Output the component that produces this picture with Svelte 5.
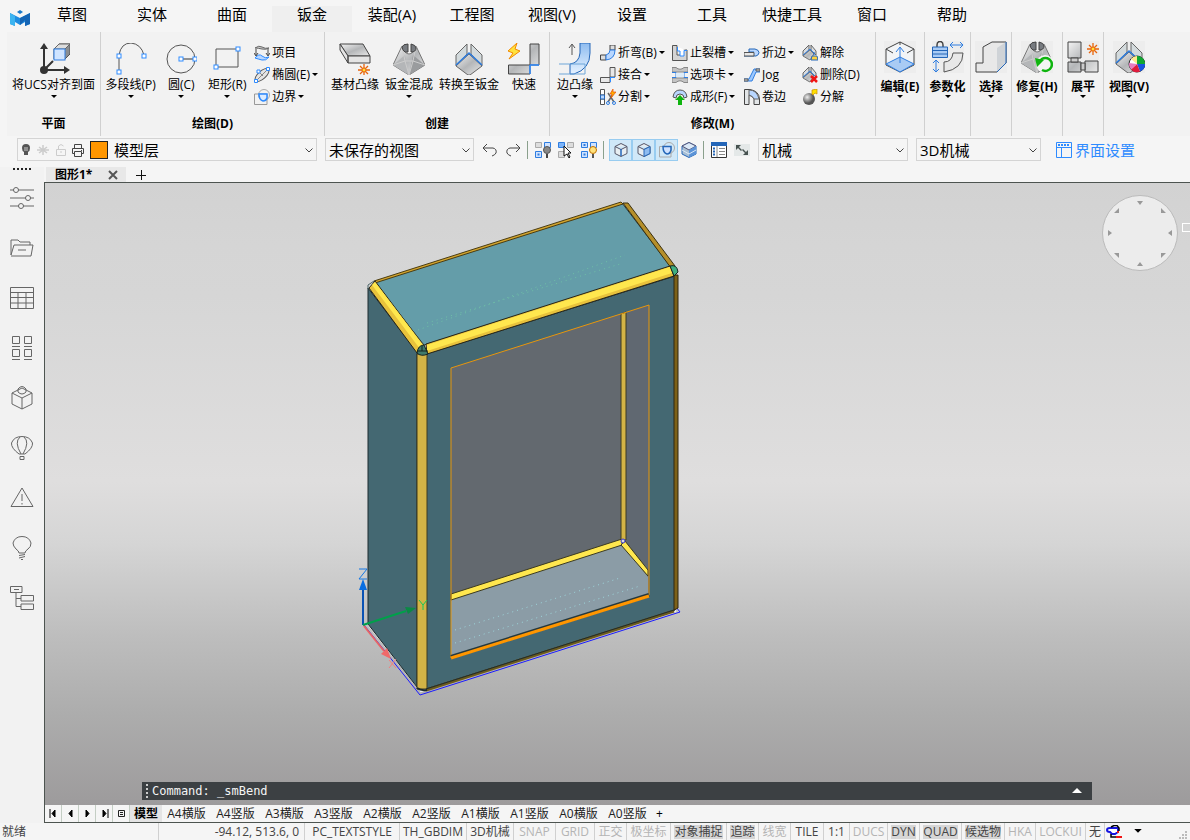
<script>
  const menus = ['草图', '实体', '曲面', '钣金', '装配(A)', '工程图', '视图(V)', '设置', '工具', '快捷工具', '窗口', '帮助'];
  let activeMenu = $state('钣金');
  let activeSheet = $state('模型');
  let layer = $state('模型层');
  let view = $state('未保存的视图');
  let workspace = $state('机械');
  let profile = $state('3D机械');

  const groups = [
    {
      id: 'plane',
      title: '平面',
      large: [{ icon: 'ucs', label: '将UCS对齐到面', menu: true }],
      columns: []
    },
    {
      id: 'draw',
      title: '绘图(D)',
      large: [
        { icon: 'polyline', label: '多段线(P)', menu: true },
        { icon: 'circle', label: '圆(C)', menu: true },
        { icon: 'rect', label: '矩形(R)', menu: true }
      ],
      columns: [
        [
          { icon: 'project', label: '项目' },
          { icon: 'ellipse', label: '椭圆(E)', menu: true },
          { icon: 'boundary', label: '边界', menu: true }
        ]
      ]
    },
    {
      id: 'create',
      title: '创建',
      large: [
        { icon: 'baseFlange', label: '基材凸缘' },
        { icon: 'loft', label: '钣金混成', menu: true },
        { icon: 'convert', label: '转换至钣金' },
        { icon: 'quick', label: '快速' }
      ],
      columns: []
    },
    {
      id: 'modify',
      title: '修改(M)',
      large: [{ icon: 'edgeFlange', label: '边凸缘', menu: true }],
      columns: [
        [
          { icon: 'bend', label: '折弯(B)', menu: true },
          { icon: 'joint', label: '接合', menu: true },
          { icon: 'split', label: '分割', menu: true }
        ],
        [
          { icon: 'relief', label: '止裂槽', menu: true },
          { icon: 'tab', label: '选项卡', menu: true },
          { icon: 'form', label: '成形(F)', menu: true }
        ],
        [
          { icon: 'hem', label: '折边', menu: true },
          { icon: 'jog', label: 'Jog' },
          { icon: 'curl', label: '卷边' }
        ],
        [
          { icon: 'dissolve', label: '解除' },
          { icon: 'remove', label: '删除(D)' },
          { icon: 'explode', label: '分解' }
        ]
      ]
    }
  ];

  const collapsed = [
    { id: 'edit', icon: 'edit', label: '编辑(E)' },
    { id: 'param', icon: 'param', label: '参数化' },
    { id: 'select', icon: 'select', label: '选择' },
    { id: 'repair', icon: 'repair', label: '修复(H)' },
    { id: 'flat', icon: 'flat', label: '展平' },
    { id: 'view', icon: 'viewColor', label: '视图(V)' }
  ];

  const sideTools = [
    { icon: 'sliders', label: '属性' },
    { icon: 'folder', label: '图纸' },
    { icon: 'table', label: '表格' },
    { icon: 'blocks', label: '图块' },
    { icon: 'component', label: '组件' },
    { icon: 'balloon', label: '渲染' },
    { icon: 'warning', label: '警告' },
    { icon: 'bulb', label: '提示' },
    { icon: 'tree', label: '结构' }
  ];

  const sheetNav = [
    { label: '第一个', d: 'M1 0V9M3 4.5L6 1V8Z' },
    { label: '上一个', d: 'M3 4.5L6 1V8Z' },
    { label: '下一个', d: 'M6 4.5L3 1V8Z' },
    { label: '最后一个', d: 'M8 0V9M6 4.5L3 1V8Z' }
  ];
  const sheets = ['模型', 'A4横版', 'A4竖版', 'A3横版', 'A3竖版', 'A2横版', 'A2竖版', 'A1横版', 'A1竖版', 'A0横版', 'A0竖版'];

  // state: '' normal, 'off' greyed, 'on' pressed
  const status = [
    ['PC_TEXTSTYLE', ''], ['TH_GBDIM', ''], ['3D机械', ''],
    ['SNAP', 'off'], ['GRID', 'off'], ['正交', 'off'], ['极坐标', 'off'],
    ['对象捕捉', 'on'], ['追踪', 'on'], ['线宽', 'off'],
    ['TILE', ''], ['1:1', ''], ['DUCS', 'off'],
    ['DYN', 'on'], ['QUAD', 'on'], ['候选物', 'on'],
    ['HKA', 'off'], ['LOCKUI', 'off'], ['无', '']
  ];

  const box = (x, y) => `<rect x="${x - 2}" y="${y - 2}" width="4" height="4" fill="#fff" stroke="#2e8bff"/>`;
  const spark = (x, y) =>
    `<path d="M${x} ${y - 6}V${y + 6}M${x - 6} ${y}H${x + 6}M${x - 4} ${y - 4}L${x + 4} ${y + 4}M${x + 4} ${y - 4}L${x - 4} ${y + 4}" stroke="#e8640c" stroke-width="1.3"/><circle cx="${x}" cy="${y}" r="2" fill="#ffe23c" stroke="#e8640c"/>`;
  const loftShape =
    '<path d="M9 3L0 22L16 32L32 22L23 3L20 9Q16 13 12 9Z" fill="url(#metal)" stroke="#777"/><path d="M12 12L16 32L0 22Z" fill="#b4b6b8"/><path d="M20 12L32 22L16 32Z" fill="#9a9c9e"/><path d="M9 3L12 18L16 32L20 18L23 3M0 22L12 18L20 18L32 22" fill="none" stroke="#ccc"/><path d="M9 4Q10 1 15 1V9Q10 10 9 4ZM18 1Q23 2 23 5Q23 9 18 9Z" fill="#777b80" stroke="#444"/>';
  const prismShape =
    '<path d="M14 1V11L3 23V12ZM18 1V11L29 23V12Z" fill="#d3dadc" stroke="#666"/><path d="M3 23L16 11L29 23L17 32H15Z" fill="url(#metal)" stroke="#666"/><path d="M3 22L16 10L29 22" fill="none" stroke="#2e7de0" stroke-width="1.5"/>';
  const smallPrism =
    '<path d="M7 0V5L1 11V6ZM9 0V5L14 10V6Z" fill="#d9dcdf" stroke="#666"/><path d="M1 11L8 5L12 9L8 15L6 14Z" fill="url(#metal)" stroke="#777"/><path d="M1 10L8 4L13 9" fill="none" stroke="#2e7de0"/>';

  const icons = {
    ucs: '<path d="M6 27V5M6 27H28M6 27L15 18" stroke="#333" stroke-width="2"/><path d="M6 0L10 6H2ZM32 27L26 31V23Z" fill="#333"/><circle cx="6" cy="27" r="4" fill="#333"/><path d="M16 6L21 1H32V11L27 16H16Z" fill="#8a8e92" stroke="#555"/><path d="M16 6L21 1H32L27 6Z" fill="#ddd" stroke="#666"/><rect x="16" y="6" width="11" height="11" fill="#cfe4ff" stroke="#2e7de0"/>',
    polyline: `<path d="M4 28V12Q6 0 16 0Q26 1 29 12" fill="none" stroke="#555"/>${box(4, 13)}${box(4, 29)}${box(29, 13)}`,
    circle: `<circle cx="16" cy="16" r="14" fill="none" stroke="#555"/><path d="M16 16H30" stroke="#333"/>${box(16, 16)}${box(30, 16)}`,
    rect: `<path d="M5 6H27V24H5Z" fill="none" stroke="#555"/>${box(27, 6)}${box(5, 24)}`,
    project: '<path d="M1 3Q5 0 8 2T15 3Q12 5 8 4T1 3Z" fill="#ccc" stroke="#666"/><path d="M2 4V10M14 4V10M0 8L2 11L4 8M12 8L14 11L16 8" stroke="#444" fill="none"/><path d="M1 13Q5 8 8 11T15 12Q12 16 8 15T1 13Z" fill="#b9d7ff" stroke="#2e8bff"/>',
    ellipse: '<ellipse cx="8" cy="8" rx="8.500" ry="4" transform="rotate(-42 8 8)" fill="#e4e4e4" stroke="#555"/><path d="M2 14L14 2M4 4L9 9" stroke="#888"/><path d="M0.500 12.500h3v3h-3zM12.500 0.500h3v3h-3zM3 3h3v3h-3z" fill="#fff" stroke="#2e8bff"/>',
    boundary: '<circle cx="10" cy="6" r="5.500" fill="none" stroke="#aaa"/><path d="M0.500 5H13V15.500H0.500Z" fill="none" stroke="#999"/><path d="M5 5H13V9Q12 12 9 12Q5 11 5 5Z" fill="#dcebff" stroke="#2e8bff" stroke-width="1.500"/>',
    baseFlange: `<path d="M1 1H24L31 13H9Z" fill="url(#metal)" stroke="#444"/><path d="M1 1V7L9 20V13ZM9 13H31V20H9Z" fill="#e4e4e4" stroke="#444"/>${spark(25, 27)}`,
    loft: loftShape,
    convert: prismShape,
    quick: '<path d="M22 1H31V22H22ZM0.500 22H22V31H0.500Z" fill="url(#metal)" stroke="#444"/><path d="M22 22H31M22 22V31" stroke="#2e8bff" stroke-width="1.500"/><path d="M9 0L0 8L5 10L1 16L12 8L7 6Z" fill="#ffe23c" stroke="#f28a00"/>',
    edgeFlange: '<path d="M21 0H31V10Q31 26 15 31H11V21Q20 20 21 10Z" fill="url(#blue)" stroke="#2466b8"/><path d="M0 21H26V31H0" fill="none" stroke="#6fa6d8"/><path d="M13 12V2M10 5L13 1L16 5" fill="none" stroke="#555"/>',
    bend: '<path d="M10 0H15V5H10ZM0.500 10H6V15H0.500Z" fill="#ddd" stroke="#444"/><path d="M10 5H15Q15 14 6 15V10Q10 9 10 5Z" fill="#b9d7ff" stroke="#2e7de0"/>',
    joint: '<path d="M10 0.500H15V10H10ZM0.500 10.500H10V15.500H0.500Z" fill="#e8e8e8" stroke="#555"/><path d="M10 10.500H15M10.500 10V15" stroke="#2e8bff"/>',
    split: '<path d="M0.500 0.500H4.500V6H0.500ZM0.500 10H4.500V15.500H0.500Z" fill="#fff" stroke="#555"/><path d="M0.500 6H4.500V10H0.500Z" fill="#b9d7ff" stroke="#2466b8"/><path d="M8 4L14 13M13 5L8 13" stroke="#666" stroke-width="1.500"/><circle cx="8" cy="14" r="1.500" fill="none" stroke="#2e7de0"/><circle cx="14" cy="14" r="1.500" fill="none" stroke="#2e7de0"/><path d="M13 0L10 5H12L11 9L16 3H13Z" fill="#ffb000" stroke="#e8500c" stroke-width="0.700"/>',
    relief: '<path d="M0.500 0.500H5V10H11V5H15V15.500H0.500Z" fill="#d4d4d4" stroke="#555"/><path d="M5.500 2V6H8V11H12V5.500H15" fill="#fff" stroke="#2e8bff"/>',
    tab: '<path d="M0 0.500H4Q8 4 12 0.500H16V5H0ZM0 15.500H4Q8 12 12 15.500H16V11H0Z" fill="#c4c4c4" stroke="#888"/><path d="M0 5.500H4V10.500H0M16 5.500H12V10.500H16" fill="none" stroke="#2e7de0"/><path d="M4 6H12V10H4Z" fill="#dcebf8"/>',
    form: '<path d="M1 8Q2 1 8 1T15 8L12 9Q12 5 8 5T4 9Z" fill="#b9d7ff" stroke="#555"/><path d="M8 6L13 11H10V16H6V11H3Z" fill="#0fb40f"/>',
    hem: '<path d="M0 11H12Q15 10 15 7.500T11 4H5V7H10" fill="#b9d7ff" stroke="#2466b8"/><path d="M0 7.500H10V11H0Z" fill="#e8e8e8" stroke="#555"/>',
    jog: '<path d="M0 12H5L10 2H16V5H12L8 14H0Z" fill="#9cc8ff" stroke="#2e7de0"/><path d="M0 12H4V14H0ZM12 2H16V4H12Z" fill="#ddd" stroke="#555"/>',
    curl: '<path d="M0.500 0.500H6Q15 2 15.500 10V15.500H10V10Q9 7 5 6V15.500H0.500Z" fill="#e3e6e8" stroke="#444"/><path d="M5 1V6Q9 7 10 10H15Q13 1 5 1Z" fill="#b9d7ff" stroke="#666"/>',
    dissolve: `${smallPrism}<path d="M12 7V10M9 15L10 11H15L16 15Z" fill="#ffd23c" stroke="#2466b8"/>`,
    remove: `${smallPrism}<path d="M9 9L15 15M15 9L9 15" stroke="#f01414" stroke-width="2.500"/>`,
    explode: '<circle cx="7" cy="10" r="6" fill="url(#ball)"/><path d="M10 1L15 0V5L13 4L11 6L10 5Z" fill="#ffe000" stroke="#c89000" stroke-width="0.700"/>',
    edit: '<path d="M2 8L16 1L30 8V24L16 31L2 24Z" fill="#f2f4f6" stroke="#444"/><path d="M2 23L16 16L30 23L16 31Z" fill="#a9cbf4" stroke="#2e7de0"/><path d="M16 22V7M12 11L16 6L20 11" fill="none" stroke="#2e7de0"/><path d="M2 8L9 12M30 8L23 12M16 1V4" stroke="#444"/>',
    param: '<path d="M5 6V4Q5 0.500 8 0.500T11 4V6" fill="none" stroke="#444" stroke-width="1.500"/><path d="M0.500 6H15.500V16.500H0.500Z" fill="#a9cbf4" stroke="#2466b8"/><path d="M0.500 9.500H15.500M0.500 13H15.500" stroke="#2466b8"/><path d="M18 4H31M21 1L18 4L21 7M28 1L31 4L28 7M4 19V31M1 22L4 19L7 22M1 28L4 31L7 28" fill="none" stroke="#2e7de0"/><path d="M21 12H31Q31 28 12 31V21Q20 21 21 12Z" fill="#e8e8e8" stroke="#555"/>',
    select: '<path d="M8 6L17 1H31V22L22 31H1V22H8Z" fill="#e8e8e8" stroke="#444"/><path d="M22 7L31 1V22L22 31Z" fill="#cfd3d7"/><path d="M22 31L31 22V1" fill="none" stroke="#2466b8"/>',
    repair: `${loftShape}<circle cx="24" cy="23" r="9" fill="#f5f5f5"/><path d="M18 22A6.500 6.500 0 1 1 21 29" fill="none" stroke="#0fb40f" stroke-width="2.500"/><path d="M14 17L23 19L16 26Z" fill="#0fb40f"/>`,
    flat: `<path d="M1 1H14V17H1ZM1 21H14V31H1ZM18 20H31V31H18Z" fill="url(#metal)" stroke="#444"/><path d="M4 17H11V21H4ZM14 22H18V29H14Z" fill="#ccc" stroke="#444"/>${spark(26, 8)}`,
    viewColor: `${prismShape}<circle cx="24" cy="23" r="8" fill="#fff" stroke="#333"/><path d="M24 23L24 15A8 8 0 0 1 32 23Z" fill="#10a830"/><path d="M24 23H32A8 8 0 0 1 27 30.500Z" fill="#1854e0"/><path d="M24 23L27 30.500A8 8 0 0 1 18 28.500Z" fill="#e01c3c"/><path d="M24 23L18 28.500A8 8 0 0 1 16 22Z" fill="#e87cc0"/><path d="M24 23L24 15A8 8 0 0 0 18 18Z" fill="#ffe98c"/>`
  };

  const sideIcons = {
    sliders: '<path d="M0 4H4M8 4H24M0 12H16M20 12H24M0 20H9M13 20H24"/><circle cx="6" cy="4" r="2.500"/><circle cx="18" cy="12" r="2.500"/><circle cx="11" cy="20" r="2.500"/>',
    folder: '<path d="M1 19V4H8L10 6H20V9M1 19L4 9H23L21 20H1M8 14H16"/>',
    table: '<path d="M0.500 1.500H23.500V22.500H0.500ZM0.500 6.500H23.500M0.500 11.500H23.500M0.500 17H23.500M8 6V22M16 6V22"/>',
    blocks: '<path d="M2.500 0.500H9.500V7.500H2.500ZM14.500 0.500H21.500V7.500H14.500ZM2.500 13.500H9.500V20.500H2.500ZM14.500 13.500H21.500V20.500H14.500ZM2 10.500H10M14 10.500H22M2 23.500H10M14 23.500H22"/>',
    component: '<path d="M2 7L12 2L22 7V18L12 23L2 18ZM2 7L12 12L22 7M12 12V23"/><path d="M8 3V6Q12 10 16 6V3Q12 -2 8 3Z"/>',
    balloon: '<path d="M9 18Q1 12 1.500 7Q4 0.500 12 0.500T22.500 7Q23 12 15 18ZM11 18Q4 6 10 1M13 18Q20 6 14 1M10 20.500H14V23.500H10Z"/>',
    warning: '<path d="M12 2L23 20.500H1ZM12 8V15M12 17V18.500"/>',
    bulb: '<path d="M9 17Q9 15 6 13Q3 10 3 7Q5 0.500 12 0.500T21 7Q21 11 18 13Q15 15 15 17ZM9 19.500L15 18.500M9 22L15 20.500M11 23.500H13"/>',
    tree: '<path d="M0.500 0.500H12V6.500H0.500ZM4 3.500H9M6 7V20.500H11M6 12.500H11M11 9.500H23.500V15H11ZM11 18H23.500V23.500H11Z"/>'
  };
</script>

{#snippet chevron()}
  <svg class="chevron" viewBox="0 0 8 8" aria-hidden="true"><path d="M0.500 2.500L4 6L7.500 2.500" fill="none" stroke="#444" /></svg>
{/snippet}

{#snippet caret()}
  <svg class="caret" viewBox="0 0 6 4" aria-hidden="true"><path d="M0 0H6L3 3Z" /></svg>
{/snippet}

<svg class="defs" width="0" height="0" aria-hidden="true">
  <defs>
    <linearGradient id="metal" x2="1" y2="1">
      <stop offset="0" stop-color="#f4f4f4" />
      <stop offset="0.5" stop-color="#b4b6b8" />
      <stop offset="1" stop-color="#e8e8e8" />
    </linearGradient>
    <linearGradient id="blue" x2="0" y2="1">
      <stop offset="0" stop-color="#8ebcf0" />
      <stop offset="1" stop-color="#e6f2ff" />
    </linearGradient>
    <radialGradient id="ball" cx="0.35" cy="0.35">
      <stop offset="0" stop-color="#eee" />
      <stop offset="1" stop-color="#555" />
    </radialGradient>
  </defs>
</svg>

<div class="app">
  <header class="top">
    <nav class="menubar">
      <svg class="logo" viewBox="0 0 20 16" aria-hidden="true">
        <path d="M0 3L10 8L20 3V14L15 16V12L10 15L5 12V16L0 14Z" fill="#1f8ce0" />
        <path d="M0 3L5 6V16L0 14Z" fill="#3cb4f0" />
        <path d="M10 8L20 3V14L15 16V10L10 15Z" fill="#1464b4" />
        <path d="M10 0L13 2L10 4L7 2Z" fill="#1878c8" />
      </svg>
      {#each menus as menu}
        <button class="menu" class:active={menu === activeMenu} onclick={() => (activeMenu = menu)}>{menu}</button>
      {/each}
    </nav>

    <div class="ribbon">
      {#each groups as group}
        <section class="group {group.id}">
          <div class="tools">
            {#each group.large as tool}
              <button class="large">
                <svg viewBox="0 0 32 32" aria-hidden="true">{@html icons[tool.icon]}</svg>
                <span>{tool.label}</span>
                {#if tool.menu}{@render caret()}{/if}
              </button>
            {/each}
            {#each group.columns as column}
              <div class="column">
                {#each column as tool}
                  <button class="small">
                    <svg viewBox="0 0 16 16" aria-hidden="true">{@html icons[tool.icon]}</svg>
                    <span>{tool.label}</span>
                    {#if tool.menu}{@render caret()}{/if}
                  </button>
                {/each}
              </div>
            {/each}
          </div>
          <h2>{group.title}</h2>
        </section>
      {/each}
      {#each collapsed as tool}
        <section class="group collapsed {tool.id}">
          <button class="large">
            <svg viewBox="0 0 32 32" aria-hidden="true">{@html icons[tool.icon]}</svg>
            <span>{tool.label}</span>
            {@render caret()}
          </button>
        </section>
      {/each}
    </div>

    <div class="toolbar">
      <div class="combo layer">
        <svg class="ic tiny" viewBox="0 0 16 16" aria-hidden="true"><path d="M4 6Q4 2 8 2T12 6Q12 9 10 10V13H6V10Q4 9 4 6Z" fill="#555" /><path d="M7 5V9M9 5V9" stroke="#ccc" /></svg>
        <svg class="ic tiny" viewBox="0 0 16 16" aria-hidden="true"><path d="M2 8H14M8 3V13M4 5L12 11M12 5L4 11" stroke="#ccc" stroke-width="1.500" /></svg>
        <svg class="ic tiny" viewBox="0 0 16 16" aria-hidden="true"><path d="M3.500 7.500H12.500V13.500H3.500ZM5.500 7V4Q8 1 10.500 4M8 9V11" fill="none" stroke="#ccc" /></svg>
        <svg class="ic" viewBox="0 0 16 16" aria-hidden="true"><path d="M4.500 6V2.500H11.500V6M4 11.500H2.500V6.500H13.500V11.500H12M4.500 9.500H11.500V14.500H4.500ZM11 8.500H12" fill="none" stroke="#444" /></svg>
        <span class="swatch"></span>
        <select aria-label="图层" bind:value={layer}><option>模型层</option></select>
        {@render chevron()}
      </div>
      <div class="combo views">
        <select aria-label="视图" bind:value={view}><option>未保存的视图</option></select>
        {@render chevron()}
      </div>
      <div class="icons">
        <button aria-label="撤销"><svg class="ic" viewBox="0 0 16 16"><path d="M5 2L1 6L5 10M1 6H11Q15 7 14 11Q13 13 10 14" fill="none" stroke="#444" /></svg></button>
        <button aria-label="重做"><svg class="ic" viewBox="0 0 16 16"><path d="M11 2L15 6L11 10M15 6H5Q1 7 2 11Q3 13 6 14" fill="none" stroke="#444" /></svg></button>
      </div>
      <div class="icons ruled">
        <button aria-label="隐藏对象">
          <svg class="ic" viewBox="0 0 16 16"><path d="M0.500 0.500h6v5h-6z" fill="#ddd" stroke="#aaa" /><path d="M9.500 0.500h6v5h-6zM0.500 9.500h6v6h-6z" fill="#cfe2ff" stroke="#2e7de0" /><path d="M2.500 11.500h2v2h-2z" fill="#2e7de0" /><circle cx="12" cy="8" r="3.500" fill="#888" stroke="#555" /><path d="M11 12H13V16H11Z" fill="#444" /></svg>
        </button>
        <button aria-label="选择隔离">
          <svg class="ic" viewBox="0 0 16 16"><path d="M0.500 0.500h6v5h-6z" fill="#7db4f8" stroke="#2e7de0" /><path d="M9.500 0.500h6v5h-6zM0.500 9.500h6v6h-6z" fill="#ddd" stroke="#aaa" /><path d="M6 4L13 11H10L12 15L11 16L9 12L6 14Z" fill="#fff" stroke="#111" /></svg>
        </button>
        <button aria-label="显示对象">
          <svg class="ic" viewBox="0 0 16 16"><path d="M0.500 0.500h6v5h-6zM9.500 0.500h6v5h-6zM0.500 9.500h6v6h-6z" fill="#cfe2ff" stroke="#2e7de0" /><path d="M2.500 2h2v2h-2zM2.500 11.500h2v2h-2z" fill="#2e7de0" /><circle cx="12" cy="8" r="3.500" fill="#ffe27c" stroke="#c07000" /><path d="M11 12H13V16H11Z" fill="#555" /></svg>
        </button>
      </div>
      <div class="icons ruled modes">
        <button class="toggle" aria-label="边线" aria-pressed="true">
          <svg class="ic" viewBox="0 0 16 16"><path d="M2 4.500L8 1.500L14 4.500V11.500L8 14.500L2 11.500ZM2 4.500L8 7.500L14 4.500" fill="#e8eef2" stroke="#556" /><path d="M8 7V14" stroke="#2466b8" stroke-width="1.500" /></svg>
        </button>
        <button class="toggle" aria-label="面" aria-pressed="true">
          <svg class="ic" viewBox="0 0 16 16"><path d="M2 4.500L8 1.500L14 4.500V11.500L8 14.500L2 11.500ZM2 4.500L8 7.500L14 4.500" fill="#e8eef2" stroke="#556" /><path d="M8 7.500L14 4.500V11.500L8 14.500Z" fill="#8ebcf0" stroke="#2466b8" /></svg>
        </button>
        <button class="toggle" aria-label="边界" aria-pressed="true">
          <svg class="ic" viewBox="0 0 16 16"><circle cx="10" cy="6" r="5.500" fill="none" stroke="#aaa" /><path d="M0.500 4.500H12V15H0.500Z" fill="none" stroke="#aaa" /><path d="M4 4.500H12V8Q11 12 8 12Q4 11 4 4.500Z" fill="#cfe2ff" stroke="#2466b8" stroke-width="1.500" /></svg>
        </button>
        <button aria-label="实体">
          <svg class="ic" viewBox="0 0 16 16"><path d="M1 4L8 0.500L15 4V12L8 15.500L1 12Z" fill="#a9bfd4" stroke="#2466b8" /><path d="M1 4L8 8L15 4L8 0.500Z" fill="#dbe9f8" stroke="#557" /><path d="M8 8L15 4V12L8 15.500Z" fill="#5c94d8" /><path d="M1 8L8 12L15 8" fill="none" stroke="#dbe9f8" /></svg>
        </button>
      </div>
      <div class="icons ruled">
        <button aria-label="面板"><svg class="ic" viewBox="0 0 16 16"><path d="M0.500 0.500H15.500V15.500H0.500Z" fill="#fff" stroke="#333" /><path d="M0 0H16V4H0Z" fill="#2466b8" /><path d="M2 6.500H4M2 9.500H4M2 12.500H4" stroke="#2466b8" stroke-width="2" /><path d="M6 4V15M8 6.500H14M8 9.500H14M8 12.500H14" stroke="#888" /></svg></button>
        <button aria-label="缩放"><svg class="ic" viewBox="0 0 16 16"><path d="M0 2H16V14H0Z" fill="#e4e8e8" /><path d="M2 3H7L5 5L8 8L7 9L4 6L2 8ZM14 13H9L11 11L8 8L9 7L12 10L14 8Z" fill="#465250" /></svg></button>
      </div>
      <div class="combo space">
        <select aria-label="工作空间" bind:value={workspace}><option>机械</option></select>
        {@render chevron()}
      </div>
      <div class="combo profile">
        <select aria-label="配置" bind:value={profile}><option>3D机械</option></select>
        {@render chevron()}
      </div>
      <a class="settings" href="#settings">
        <svg class="ic" viewBox="0 0 16 16" aria-hidden="true"><path d="M0.500 0.500H15.500V15.500H0.500ZM0.500 5.500H15.500M5.500 5.500V15" fill="none" stroke="#2e8bff" /><path d="M2 3H14" stroke="#2e8bff" stroke-width="2" stroke-dasharray="2 1" /></svg>
        界面设置
      </a>
    </div>
  </header>

  <div class="body">
    <aside>
      <span class="grip"></span>
      {#each sideTools as tool}
        <button aria-label={tool.label}>
          <svg viewBox="0 0 24 24">{@html sideIcons[tool.icon]}</svg>
        </button>
      {/each}
    </aside>

    <main>
      <div class="doctabs">
        <div class="doctab">
          <span>图形1*</span>
          <button aria-label="关闭"><svg viewBox="0 0 10 10"><path d="M1 1L9 9M9 1L1 9" stroke="#555" stroke-width="2" /></svg></button>
        </div>
        <button class="add" aria-label="新建"><svg viewBox="0 0 10 10"><path d="M0 5.500H10M5.500 0V10" stroke="#111" /></svg></button>
      </div>

      <div class="canvas">
        <svg class="model" viewBox="340 190 360 520" role="img" aria-label="钣金模型">
          <!-- base outline -->
          <path d="M364 625L420 695L680 612L676 607" fill="none" stroke="#1a1aff" />
          <path d="M368 624L421 691L676 611" fill="none" stroke="#eee" stroke-width="2" />

          <path d="M368 288L417 352V687L368 624Z" fill="#446872" stroke="#1d2a2e" />
          <path d="M374 282L622 203L671 267L424 345Z" fill="#649da9" stroke="#26383c" />
          <path d="M426 354L675 276V610L426 689Z" fill="#446872" stroke="#1d2a2e" />
          <path d="M427 323L620 264M418 330L625 255" stroke="#6fc0a8" stroke-dasharray="1 4" />

          <!-- opening and what shows through it -->
          <path d="M451 368L649 305V595L451 658Z" fill="#63696f" />
          <path d="M626 313L648 306V573L626 543Z" fill="#606871" />
          <path d="M451 599L622 544L648 577V595L451 657Z" fill="#8b9ca6" />
          <path d="M455 630L620 578M455 643L640 586" stroke="#9ed6dc" stroke-dasharray="1 4" />
          <path d="M451 594L622 539V545L451 600Z" fill="#ffe74e" stroke="#3c3a20" />
          <path d="M625 541L648 570V576L621 545Z" fill="#ffe74e" stroke="#3c3a20" />
          <path d="M621 314L626 312V540H621Z" fill="#d3b446" stroke="#3c3a20" />
          <circle cx="623" cy="541" r="2" fill="#ddd" stroke="#3a3ad0" />
          <path d="M451 658V368L649 305V595" fill="none" stroke="#e8960c" />
          <path d="M451 657L649 595" stroke="#26383c" stroke-width="4" />
          <path d="M451 658L649 596" stroke="#ff9600" stroke-width="3" />

          <!-- bends -->
          <path d="M374 281L621 202L623 204L375 283Z" fill="#d3a52e" stroke="#4a3c12" />
          <path d="M623 203L628 203L675 266L671 268Z" fill="#b58f2a" stroke="#3a3010" />
          <path d="M369 288L375 281L424 346L417 353Z" fill="#e8c23c" stroke="#26251a" />
          <path d="M372 285L375 282L424 346L420 349Z" fill="#ffe74e" />
          <path d="M426 344L670 266L674 276L427 354Z" fill="#e8c23c" stroke="#26251a" />
          <path d="M427 345L670 267L672 273L427 351Z" fill="#ffe74e" />
          <path d="M417 354H427V689H417Z" fill="#d3b446" stroke="#3c3a20" />
          <path d="M674 275H678V608L674 610Z" fill="#7d6118" stroke="#2e2610" />
          <path d="M426 690L674 611" stroke="#6b5a1c" stroke-width="3" />
          <path d="M426 689L674 610" stroke="#1d2a2e" />
          <path d="M417 688Q421 691 427 690" fill="none" stroke="#1d2a2e" stroke-width="2" />
          <path d="M417 353Q418 345 424 345L428 354Q421 357 417 353Z" fill="#3f7a6a" stroke="#162420" />
          <path d="M417 351H428M422 346V351" stroke="#162420" />
          <path d="M670 266Q677 264 678 272L674 276Z" fill="#3fae80" stroke="#162420" />
          <path d="M368 289V285L374 281" fill="none" stroke="#4d6468" />

          <!-- axes -->
          <path d="M363 625V588" stroke="#0a52b4" stroke-width="2" />
          <path d="M363 579L367 590H359Z" fill="#0a6ee0" />
          <path d="M363 625L406 611" stroke="#00a04a" stroke-width="2" />
          <path d="M416 608L408 614L405 607Z" fill="#0a8a44" />
          <path d="M364 626L384 651" stroke="#e86464" stroke-width="2" />
          <path d="M391 659L381 654L387 648Z" fill="#f06a6a" />
          <path d="M359 569H367L359 579H367" fill="none" stroke="#1478e6" />
          <path d="M419 600L423 605L427 600M423 605V610" fill="none" stroke="#14c85a" />
          <path d="M389 660L396 668M396 659L389 668" fill="none" stroke="#f08080" />
        </svg>

        <svg class="compass" viewBox="0 0 76 76" aria-hidden="true">
          <circle cx="38" cy="38" r="37.500" fill="#ececec" stroke="#bbb" />
          <path d="M35 6H41L38 10ZM35 71H41L38 67ZM6 35V41L10 38ZM70 35V41L66 38ZM17 13V18H12ZM59 13V18H64ZM17 63V58H12ZM59 63V58H64Z" fill="#999" />
        </svg>
        <span class="handle"></span>

        <div class="command">
          <span class="dots"></span>
          <output>Command: _smBend</output>
          <button aria-label="展开命令历史"><svg viewBox="0 0 10 6"><path d="M0 5L5 0L10 5Z" fill="#fff" /></svg></button>
        </div>
      </div>

      <div class="sheets">
        {#each sheetNav as nav}
          <button class="nav" aria-label={nav.label}><svg viewBox="0 0 9 9"><path d={nav.d} stroke="#000" /></svg></button>
        {/each}
        <button class="nav" aria-label="布局列表"><svg viewBox="0 0 9 9"><path d="M1.500 1.500H7.500V7.500H1.500ZM3 3.500H6M3 5.500H6" fill="none" stroke="#222" /></svg></button>
        {#each sheets as sheet}
          <button class="sheet" class:active={sheet === activeSheet} onclick={() => (activeSheet = sheet)}>{sheet}</button>
        {/each}
        <button class="more">+</button>
      </div>
    </main>
  </div>

  <footer>
    <span class="ready">就绪</span>
    <span class="coords">-94.12, 513.6, 0</span>
    {#each status as [label, mode]}
      <button class={mode}><span>{label}</span></button>
    {/each}
    <button class="tray" aria-label="通知">
      <svg viewBox="0 0 16 14"><path d="M1 5Q1 3 4 3H12V7L9 9H6L4 7Q1 7 1 5Z" fill="#fff" stroke="#1414e0" stroke-width="2" /><path d="M5 2L8 0.500H11L13 3V6M5 9V12H11" fill="none" stroke="#000" stroke-width="1.500" /><path d="M11 6H13V8H11ZM10 11H16V13H10Z" fill="#f01414" /></svg>
      <svg class="caret" viewBox="0 0 6 4"><path d="M0 0H6L3 3Z" /></svg>
    </button>
    <svg class="resize" viewBox="0 0 10 10" aria-hidden="true"><path d="M7 1h2v2h-2zM4 4h2v2h-2zM7 4h2v2h-2zM1 7h2v2h-2zM4 7h2v2h-2zM7 7h2v2h-2z" fill="#bbb" /></svg>
  </footer>
</div>

<style>
  :global(body) {
    background: #f5f5f5;
  }

  .defs {
    display: block;
  }

  .app {
    display: flex;
    flex-direction: column;
    min-height: 100vh;
    color: #000;
    background: #f5f5f5;
    font: 12px/16px "Open Sans", "Noto Sans CJK SC", sans-serif;
  }

  button,
  select {
    margin: 0;
    padding: 0;
    border: 0;
    background: none;
    color: inherit;
    font: inherit;
    white-space: nowrap;
  }

  svg {
    display: block;
    flex: none;
  }

  .top {
    display: flex;
    flex-direction: column;
    padding-left: 7px;
  }

  /* menu */
  .menubar {
    display: flex;
    align-items: flex-start;
    height: 32px;
  }

  .logo {
    width: 20px;
    height: 16px;
    margin: 10px 2px 0 3px;
  }

  .menu {
    width: 80px;
    height: 32px;
    padding-bottom: 4px;
    font-size: 15px;
    line-height: 20px;
  }

  .menu.active {
    background: linear-gradient(transparent 6px, #efefef 6px);
  }

  /* ribbon */
  .ribbon {
    display: flex;
    height: 104px;
    background: #f2f2f2;
  }

  .group {
    display: flex;
    flex-direction: column;
    box-sizing: border-box;
    padding: 10px 6px 0;
    border-right: 1px solid #d0d0d0;
  }

  .group h2 {
    margin: auto 0 3px;
    font-size: 12px;
    line-height: 18px;
    font-weight: 700;
    text-align: center;
  }

  .plane { width: 94px; }
  .draw { width: 224px; }
  .create { width: 225px; }
  .modify { width: 326px; }
  .edit { width: 49px; }
  .param { width: 46px; }
  .select { width: 41px; }
  .repair { width: 51px; }
  .flat { width: 41px; }
  .view { width: 50px; }

  .tools {
    display: flex;
    gap: 6px;
  }

  .plane .tools {
    justify-content: center;
  }

  .draw .tools {
    gap: 8px;
  }

  .large {
    display: flex;
    flex-direction: column;
    align-items: center;
    min-width: 38px;
  }

  .large > svg:first-child {
    width: 32px;
    height: 32px;
    margin: 1px 0 2px;
  }

  .collapsed {
    align-items: center;
    padding: 8px 0 0;
    font-weight: 700;
  }

  .collapsed:last-child {
    border-right: 0;
  }

  .collapsed > .large > svg:first-child {
    margin-bottom: 6px;
    background: #ededed;
  }

  .caret {
    width: 6px;
    height: 4px;
    margin-top: 2px;
  }

  .collapsed .caret {
    margin-top: 0;
  }

  .column {
    display: flex;
    flex-direction: column;
    width: 66px;
  }

  .modify .column:nth-last-child(2) {
    width: 52px;
  }

  .small {
    display: flex;
    align-items: center;
    gap: 2px;
    height: 22px;
  }

  .small > svg:first-child {
    width: 16px;
    height: 16px;
  }

  .small .caret {
    margin-top: 0;
  }

  /* toolbar */
  .toolbar {
    display: flex;
    align-items: center;
    gap: 8px;
    padding: 2px 10px 6px;
    font-size: 15px;
  }

  .combo {
    display: flex;
    align-items: center;
    box-sizing: border-box;
    height: 23px;
    border: 1px solid #d4d4d4;
  }

  .combo select {
    flex: 1;
    min-width: 0;
    height: 20px;
    padding: 0 20px 0 3px;
    margin-right: -12px;
    appearance: none;
    line-height: 20px;
  }

  .combo .chevron {
    width: 8px;
    height: 8px;
    margin-right: 3px;
    pointer-events: none;
  }

  .layer { width: 300px; }
  .views { width: 149px; }
  .space { width: 150px; }
  .profile { width: 125px; }

  .ic {
    width: 16px;
    height: 16px;
  }

  .layer .ic {
    margin-right: 4px;
  }

  .layer .tiny {
    margin: 0 1px;
  }

  .layer .tiny:first-child {
    margin: 0;
  }

  .swatch {
    box-sizing: border-box;
    width: 18px;
    height: 18px;
    margin-right: 3px;
    border: 1px solid #222;
    background: #ff9600;
  }

  .icons {
    display: flex;
    align-items: center;
    gap: 7px;
  }

  .ruled {
    height: 18px;
    margin-left: -2px;
    padding-left: 7px;
    border-left: 1px solid #8aa08c;
  }

  .modes {
    gap: 0;
    padding-left: 5px;
  }

  .modes button:last-child {
    padding-left: 3px;
  }

  .toggle {
    display: grid;
    place-items: center;
    box-sizing: border-box;
    width: 23px;
    height: 22px;
    border: 1px solid #98ccf0;
    background: #d0e8f8;
  }

  .settings {
    display: flex;
    align-items: center;
    gap: 3px;
    margin-left: 7px;
    color: #2e8bff;
    text-decoration: none;
    line-height: 20px;
  }

  /* body */
  .body {
    display: flex;
    flex: 1;
  }

  aside {
    display: flex;
    flex-direction: column;
    align-items: center;
    width: 44px;
    background: #f2f2f2;
  }

  .grip {
    width: 18px;
    margin: 1px 0 16px;
    border-top: 2px dotted #222;
  }

  aside button {
    height: 24px;
    margin-bottom: 26px;
  }

  aside svg {
    width: 24px;
    height: 24px;
    fill: none;
    stroke: #666;
  }

  main {
    display: flex;
    flex: 1;
    flex-direction: column;
    min-width: 0;
  }

  .doctabs {
    display: flex;
    align-items: stretch;
    height: 15px;
    padding-left: 2px;
  }

  .doctab {
    display: flex;
    align-items: center;
    gap: 16px;
    padding: 0 8px 0 9px;
    background: #e8e8e8;
    font-weight: 700;
    line-height: 14px;
  }

  .doctabs svg {
    width: 10px;
    height: 10px;
  }

  .add {
    padding: 0 10px;
  }

  .canvas {
    position: relative;
    display: flex;
    flex: 1;
    flex-direction: column;
    justify-content: flex-end;
    padding: 0 98px 5px 97px;
    border: solid #4d5450;
    border-width: 1px 0 0 1px;
    background: linear-gradient(#d2d2d2, #d5d5d5 10%, #d6d6d6 18%, #dfdede 48%, #d5d5d5 58%, #bdbdbd 73%, #adadad 85%, #9d9b9c);
  }

  .model {
    position: absolute;
    top: 7px;
    left: 295px;
    width: 360px;
    height: 520px;
  }

  .compass {
    position: absolute;
    top: 12px;
    right: 12px;
    width: 76px;
    height: 76px;
  }

  .handle {
    position: absolute;
    top: 40px;
    right: 0;
    width: 7px;
    height: 7px;
    border: 1px solid #fff;
    border-right: 0;
  }

  .command {
    display: flex;
    align-items: center;
    height: 18px;
    padding: 0 10px 0 4px;
    background: #3c4043;
    color: #f5f5f5;
    font: 12px/18px "DejaVu Sans Mono", monospace;
  }

  .dots {
    height: 14px;
    margin-right: 4px;
    border-left: 2px dotted #ccc;
  }

  .command output {
    flex: 1;
  }

  .command svg {
    width: 10px;
    height: 6px;
  }

  .sheets {
    display: flex;
    height: 17px;
    border: solid #4d5450;
    border-width: 0 0 1px 1px;
  }

  .nav {
    display: grid;
    place-items: center;
    box-sizing: border-box;
    width: 17px;
    border-right: 1px solid #c4cec4;
  }

  .nav svg {
    width: 9px;
    height: 9px;
  }

  .sheet {
    min-width: 49px;
    color: #222;
    line-height: 17px;
  }

  .sheet.active {
    min-width: 32px;
    background: #e4e4e4;
    color: #000;
    font-weight: 700;
  }

  .more {
    padding: 0 4px;
  }

  /* status bar */
  footer {
    display: grid;
    grid-template-columns: 158px 146px 95px 67px 47px 42px 39px 32px 44px 56px 32px 32px 33px 26px 38px 32px 42px 43px 31px 50px 19px 1fr 12px;
    height: 17px;
    color: #444;
    line-height: 17px;
  }

  .ready {
    padding-left: 2px;
  }

  footer button,
  .coords {
    border-left: 1px solid #d0d0d0;
  }

  .coords {
    padding-right: 5px;
    text-align: right;
  }

  .off {
    color: #b4b4b4;
  }

  .on span {
    display: inline-block;
    height: 14px;
    background: #d6d6d6;
    line-height: 14px;
  }

  .tray {
    display: flex;
    align-items: center;
    gap: 12px;
    padding-left: 1px;
  }

  .tray svg {
    width: 16px;
    height: 14px;
  }

  .tray .caret {
    width: 8px;
    height: 5px;
    margin: 0;
  }

  .resize {
    align-self: end;
    width: 10px;
    height: 10px;
  }
</style>
